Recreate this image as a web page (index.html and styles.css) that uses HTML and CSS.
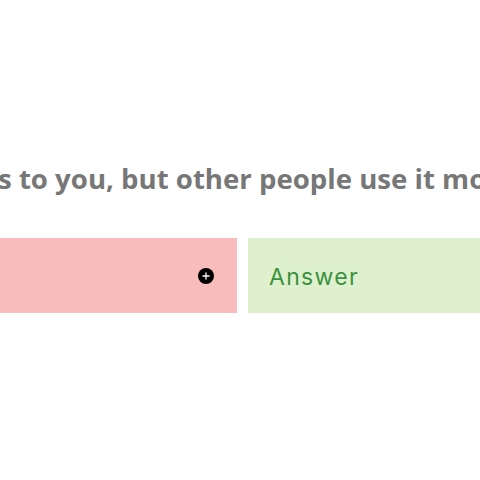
FILE: index.html
```html
<!DOCTYPE html>
<html>
<head>
<meta charset="utf-8">
<link rel="stylesheet" href="styles.css">
</head>
<body>
<div class="page">
  <p class="question">s to you, but other people use it mo</p>
  <div class="pair">
    <div class="term">
      <span class="handle">
        <svg width="16" height="16" viewBox="0 0 16 16"><circle cx="8" cy="8" r="8" fill="#000"/><path d="M8 4.5v7M4.5 8h7" stroke="#fff" stroke-width="1.3"/></svg>
      </span>
    </div>
    <div class="answer">Answer</div>
  </div>
</div>
</body>
</html>
```
FILE: styles.css
```css
html, body {
  margin: 0;
  padding: 0;
  background: #fff;
  overflow: hidden;
}
.page {
  width: 480px;
  height: 480px;
  padding-top: 158px;
  box-sizing: border-box;
}
.question {
  margin: 0;
  font-family: "Open Sans", sans-serif;
  font-weight: 700;
  font-size: 27.6px;
  line-height: 40px;
  color: #777;
  white-space: nowrap;
  overflow: hidden;
  text-indent: -2px;
}
.pair {
  margin-top: 40px;
  display: flex;
  gap: 11px;
  height: 75px;
}
.term {
  width: 237px;
  background: #f8bcbc;
  display: flex;
  align-items: center;
  justify-content: flex-end;
  padding-right: 23px;
  box-sizing: border-box;
}
.handle {
  display: flex;
  margin-top: 1px;
}
.answer {
  flex: 1;
  background: #dff0cf;
  display: flex;
  align-items: center;
  padding-left: 21px;
  padding-top: 2px;
  font-family: "Inter", sans-serif;
  font-size: 23px;
  color: #3a923d;
  letter-spacing: 1.3px;
}
```
